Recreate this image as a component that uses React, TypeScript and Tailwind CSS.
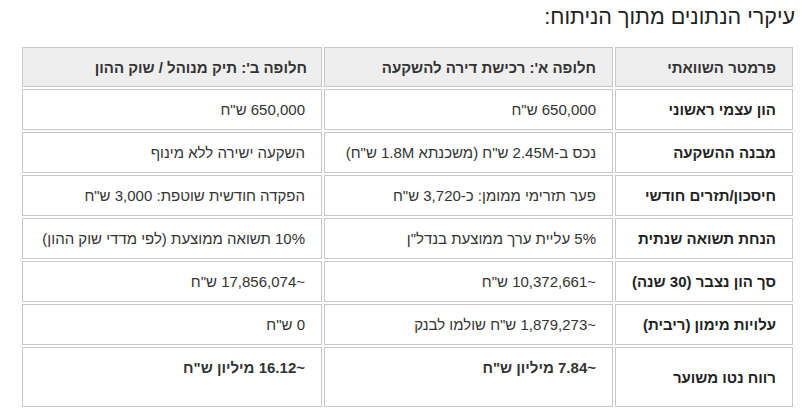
const rows = [
  { label: "הון עצמי ראשוני", a: '650,000 ש"ח', b: '650,000 ש"ח' },
  { label: "מבנה ההשקעה", a: 'נכס ב-2.45M ש"ח (משכנתא 1.8M ש"ח)', b: "השקעה ישירה ללא מינוף" },
  { label: "חיסכון/תזרים חודשי", a: 'פער תזרימי ממומן: כ-3,720 ש"ח', b: 'הפקדה חודשית שוטפת: 3,000 ש"ח' },
  { label: "הנחת תשואה שנתית", a: '5% עליית ערך ממוצעת בנדל"ן', b: "10% תשואה ממוצעת (לפי מדדי שוק ההון)" },
  { label: "סך הון נצבר (30 שנה)", a: '~10,372,661 ש"ח', b: '~17,856,074 ש"ח' },
  { label: "עלויות מימון (ריבית)", a: '~1,879,273 ש"ח שולמו לבנק', b: '0 ש"ח' },
];

export default function App() {
  return (
    <div dir="rtl" className="w-[801px] h-[418px] bg-white pr-[6px] pt-[3px] text-[#333] font-['Liberation_Sans',Arial,sans-serif]">
      <h2 className="text-[21.5px] leading-[28px] text-[#222] font-normal">עיקרי הנתונים מתוך הניתוח:</h2>

      <table className="mt-[14px] w-[775px] table-fixed border-separate border-spacing-[2px] text-[15px] leading-[19px]">
        <thead>
          <tr>
            <th className="w-[178px] h-[40px] border border-[#c8c8c8] bg-[#eeeeee] pr-[16px] pl-[8px] text-right font-bold">
              פרמטר השוואתי
            </th>
            <th className="w-[289px] border border-[#c8c8c8] bg-[#eeeeee] pr-[16px] pl-[8px] text-right font-bold">
              חלופה א': רכישת דירה להשקעה
            </th>
            <th className="w-[300px] border border-[#c8c8c8] bg-[#eeeeee] pr-[14px] pl-[8px] text-right font-bold">
              חלופה ב': תיק מנוהל / שוק ההון
            </th>
          </tr>
        </thead>
        <tbody>
          {rows.map((r) => (
            <tr key={r.label}>
              <td className="h-[41px] border border-[#c8c8c8] pr-[16px] pl-[6px] font-bold text-[#222]">{r.label}</td>
              <td className="border border-[#c8c8c8] pr-[16px] pl-[6px]">{r.a}</td>
              <td className="border border-[#c8c8c8] pr-[16px] pl-[6px]">{r.b}</td>
            </tr>
          ))}
          <tr>
            <td className="h-[60px] border border-[#c8c8c8] pr-[16px] pl-[6px] font-bold text-[#222]">רווח נטו משוער</td>
            <td className="border border-[#c8c8c8] pr-[16px] pl-[6px] pt-[10px] align-top font-bold">~7.84 מיליון ש"ח</td>
            <td className="border border-[#c8c8c8] pr-[16px] pl-[6px] pt-[10px] align-top font-bold">~16.12 מיליון ש"ח</td>
          </tr>
        </tbody>
      </table>
    </div>
  );
}
